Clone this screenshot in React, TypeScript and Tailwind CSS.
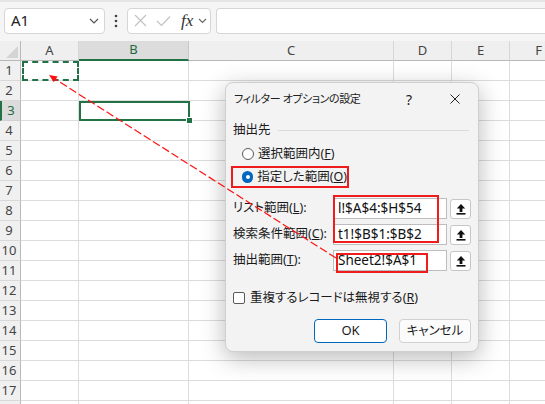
import React from 'react';

const rows = Array.from({ length: 18 }, (_, i) => i + 1);

function UploadIcon() {
  return (
    <svg width="10" height="12" viewBox="0 0 10 12">
      <path d="M5 1 L9.2 5.6 H6.4 V9 H3.6 V5.6 H0.8 Z" fill="#111" />
      <rect x="0.5" y="10" width="9" height="1.6" fill="#111" />
    </svg>
  );
}

function RangeRow({ label, value }: { label: React.ReactNode; value: string }) {
  return (
    <div className="flex items-center h-[21px]">
      <div className="flex-1 text-[12.5px] text-[#1a1a1a] whitespace-nowrap">{label}</div>
      <div className="w-[114px] h-[21px] bg-white border border-[#bdbdbd] flex items-center pl-[4px] overflow-hidden">
        <span className="text-[13.5px] text-[#111] whitespace-nowrap font-['Noto_Sans',sans-serif]">{value}</span>
      </div>
      <div className="ml-[3px] w-[21px] h-[20px] bg-white border border-[#c6c6c6] rounded-[3px] flex items-center justify-center">
        <UploadIcon />
      </div>
    </div>
  );
}

export default function App() {
  return (
    <div className="relative w-[545px] h-[404px] overflow-hidden bg-white font-['Noto_Sans','Noto_Sans_CJK_JP',sans-serif] [font-feature-settings:'palt']">
      {/* toolbar */}
      <div className="h-[41px] bg-[#f5f5f5] border-t-2 border-[#e6e6e6] flex items-center pl-[4px] pb-[2px]">
        <div className="w-[101px] h-[26px] bg-white border border-[#d6d6d6] rounded-[4px] flex items-center pl-[6px] pr-[5px]">
          <span className="text-[15px] text-[#222]">A1</span>
          <svg className="ml-auto" width="10" height="6" viewBox="0 0 10 6">
            <path d="M1 1 L5 5 L9 1" fill="none" stroke="#555" strokeWidth="1.2" />
          </svg>
        </div>
        <div className="w-[22px] flex justify-center">
          <svg width="4" height="14" viewBox="0 0 4 14">
            <circle cx="2" cy="2" r="1.3" fill="#444" />
            <circle cx="2" cy="7" r="1.3" fill="#444" />
            <circle cx="2" cy="12" r="1.3" fill="#444" />
          </svg>
        </div>
        <div className="w-[84px] h-[26px] bg-white border border-[#d6d6d6] rounded-[4px] flex items-center pl-[6px]">
          <svg width="13" height="13" viewBox="0 0 13 13">
            <path d="M1 1 L12 12 M12 1 L1 12" stroke="#c2c2c2" strokeWidth="1.2" />
          </svg>
          <svg className="ml-[9px]" width="15" height="12" viewBox="0 0 15 12">
            <path d="M1 6 L5.5 10.5 L14 1.5" fill="none" stroke="#c2c2c2" strokeWidth="1.2" />
          </svg>
          <span className="ml-[10px] font-['Liberation_Serif',serif] italic text-[17px] leading-none text-[#333]">fx</span>
          <svg className="ml-[5px]" width="9" height="6" viewBox="0 0 9 6">
            <path d="M1 1 L4.5 4.5 L8 1" fill="none" stroke="#666" strokeWidth="1.1" />
          </svg>
        </div>
        <div className="ml-[5px] flex-1 h-[26px] bg-white border border-r-0 border-[#d6d6d6] rounded-l-[4px]"></div>
      </div>

      {/* grid */}
      <div className="grid grid-cols-[21px_58px_110px_205px_58px_58px_58px]">
        <div className="relative h-5 bg-[#efefef] border-r border-b border-[#b8b8b8]">
          <svg className="absolute right-[2px] bottom-[2px]" width="12" height="12" viewBox="0 0 12 12">
            <path d="M12 0 L12 12 L0 12 Z" fill="#d4d4d4" />
          </svg>
        </div>
        <div className="h-5 bg-[#efefef] border-r border-r-[#d6d6d6] border-b border-b-[#b8b8b8] flex items-center justify-center text-[13px] text-[#444]">A</div>
        <div className="h-5 bg-[#dcdcdc] border-r border-r-[#c8c8c8] border-b-2 border-b-[#217346] flex items-center justify-center text-[13px] text-[#1e6b41]">B</div>
        <div className="h-5 bg-[#efefef] border-r border-r-[#d6d6d6] border-b border-b-[#b8b8b8] flex items-center justify-center text-[13px] text-[#444]">C</div>
        <div className="h-5 bg-[#efefef] border-r border-r-[#d6d6d6] border-b border-b-[#b8b8b8] flex items-center justify-center text-[13px] text-[#444]">D</div>
        <div className="h-5 bg-[#efefef] border-r border-r-[#d6d6d6] border-b border-b-[#b8b8b8] flex items-center justify-center text-[13px] text-[#444]">E</div>
        <div className="h-5 bg-[#efefef] border-r border-r-[#d6d6d6] border-b border-b-[#b8b8b8] flex items-center justify-center text-[13px] text-[#444]">F</div>

        {rows.map((r) => (
          <React.Fragment key={r}>
            {r === 3 ? (
              <div className="h-5 bg-[#dcdcdc] border-l-2 border-l-[#217346] border-r border-r-[#b8b8b8] border-b border-b-[#d0d0d0] flex items-center justify-center text-[13px] text-[#1e6b41]">{r}</div>
            ) : (
              <div className="h-5 bg-[#f0f0f0] border-r border-r-[#b8b8b8] border-b border-b-[#d8d8d8] flex items-center justify-center pr-[2px] text-[13px] text-[#444]">{r < 18 ? r : ''}</div>
            )}
            <div className="relative h-5 border-r border-b border-[#dcdcdc]">
              {r === 1 && <div className="absolute inset-[0_-1px_-1px_1px] border-2 border-dashed border-[#217346] z-10" />}
            </div>
            <div className="relative h-5 border-r border-b border-[#dcdcdc]">
              {r === 3 && (
                <div className="absolute inset-[0_-2px_-1px_0] border-2 border-[#217346] z-10">
                  <div className="absolute right-[-5px] bottom-[-5px] w-[7px] h-[7px] bg-[#217346] border border-white" />
                </div>
              )}
            </div>
            <div className="h-5 border-r border-b border-[#dcdcdc]" />
            <div className="h-5 border-r border-b border-[#dcdcdc]" />
            <div className="h-5 border-r border-b border-[#dcdcdc]" />
            <div className="h-5 border-r border-b border-[#dcdcdc]" />
          </React.Fragment>
        ))}
      </div>

      {/* dialog */}
      <div className="absolute left-[225px] top-[82px] w-[254px] h-[270px] z-20 rounded-[8px] bg-[#f3f3f3] border border-[#cfcfcf] shadow-[0_6px_24px_rgba(0,0,0,0.28)] flex flex-col text-[#1a1a1a]">
        <div className="h-[32px] flex items-center pl-[8px]">
          <span className="text-[11px] tracking-[-0.4px] text-[#222]">フィルター オプションの設定</span>
          <div className="ml-auto w-[46px] h-[32px] flex items-center justify-center text-[14px] text-[#222]">?</div>
          <div className="w-[46px] h-[32px] flex items-center justify-center">
            <svg width="10" height="10" viewBox="0 0 10 10">
              <path d="M0.5 0.5 L9.5 9.5 M9.5 0.5 L0.5 9.5" stroke="#222" strokeWidth="1" />
            </svg>
          </div>
        </div>
        <div className="px-[7px] flex flex-col">
          <div className="mt-[6px] h-[18px] flex items-center">
            <span className="text-[12.5px]">抽出先</span>
            <div className="ml-[7px] mr-[2px] flex-1 h-px bg-[#dadada]" />
          </div>
          <div className="mt-[4px] h-[22px] flex items-center pl-[9px]">
            <div className="w-[12px] h-[12px] rounded-full border border-[#5a5a5a] bg-white" />
            <span className="ml-[4px] text-[12.5px]">選択範囲内(<span className="underline">F</span>)</span>
          </div>
          <div className="mt-[1px] ml-[-2px] w-[118px] h-[22px] border-2 border-[#ee1c1c] flex items-center pl-[9px]">
            <div className="w-[12px] h-[12px] rounded-full bg-[#0067c0] flex items-center justify-center">
              <div className="w-[4px] h-[4px] rounded-full bg-white" />
            </div>
            <span className="ml-[4px] text-[12.5px] whitespace-nowrap">指定した範囲(<span className="underline">O</span>)</span>
          </div>
          <div className="mt-[10px] flex flex-col gap-[5px]">
            <RangeRow label={<>リスト範囲(<span className="underline">L</span>):</>} value="l!$A$4:$H$54" />
            <RangeRow label={<>検索条件範囲(<span className="underline">C</span>):</>} value="t1!$B$1:$B$2" />
            <RangeRow label={<>抽出範囲(<span className="underline">T</span>):</>} value="Sheet2!$A$1" />
          </div>
          <div className="mt-[18px] h-[18px] flex items-center">
            <div className="w-[12px] h-[12px] rounded-[2px] border border-[#5a5a5a] bg-white" />
            <span className="ml-[5px] text-[12.5px] whitespace-nowrap">重複するレコードは無視する(<span className="underline">R</span>)</span>
          </div>
          <div className="mt-[12px] flex justify-end gap-[12px]">
            <div className="w-[73px] h-[24px] rounded-[4px] bg-white border border-[#0067c0] flex items-center justify-center text-[13px]">OK</div>
            <div className="w-[72px] h-[24px] rounded-[4px] bg-[#fbfbfb] border border-[#d0d0d0] flex items-center justify-center text-[12.5px]">キャンセル</div>
          </div>
        </div>
        {/* annotation boxes */}
        <div className="absolute left-[107px] top-[112px] w-[106px] h-[48px] border-2 border-[#ee1c1c]" />
        <div className="absolute left-[110px] top-[170px] w-[92px] h-[20px] border-2 border-[#ee1c1c]" />
      </div>

      {/* arrow */}
      <svg className="absolute inset-0 z-30 pointer-events-none" width="545" height="404" viewBox="0 0 545 404">
        <line x1="336" y1="258" x2="55" y2="79" stroke="#ff1010" strokeWidth="1.2" strokeDasharray="8 3" />
        <polygon points="49,75 57.6,76.4 53.8,82.3" fill="#ff1010" />
      </svg>
    </div>
  );
}
